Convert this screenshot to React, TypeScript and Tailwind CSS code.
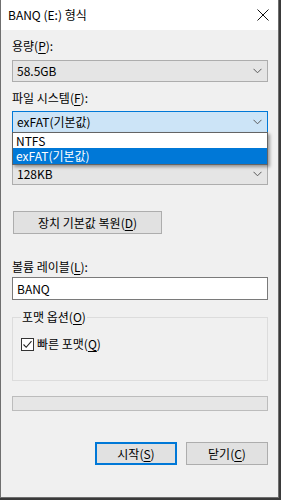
import React from "react";

const font = { fontFamily: '"Noto Sans CJK KR", "Noto Sans", sans-serif' };

function U({ c }: { c: string }) {
  return <span className="underline underline-offset-2">{c}</span>;
}

function Chevron() {
  return (
    <svg width="9" height="6" viewBox="0 0 9 6" className="absolute right-[5px] top-1/2 -translate-y-1/2">
      <path d="M0.5 0.8 L4.5 4.8 L8.5 0.8" fill="none" stroke="#5a5a5a" strokeWidth="1" />
    </svg>
  );
}

function Combo({ text, focused }: { text: string; focused?: boolean }) {
  return (
    <div
      className={`relative h-[22px] w-[256px] flex items-center pl-[4px] text-[12px] leading-[16px] text-black border ${
        focused ? "bg-[#cce4f7] border-[#0078d7]" : "bg-[#e5e5e5] border-[#adadad]"
      }`}
    >
      {text}
      <Chevron />
    </div>
  );
}

function Label({ children, mt }: { children: React.ReactNode; mt: string }) {
  return <div className={`${mt} h-[16px] text-[12px] leading-[16px] text-black`}>{children}</div>;
}

export default function App() {
  return (
    <div className="w-[281px] h-[500px] bg-[#3a3a3a] overflow-hidden" style={font}>
      <div className="relative w-[279px] h-[498px] bg-[#f0f0f0] border-l border-r border-b border-[#6f6f6f] flex flex-col">
        {/* Title bar */}
        <div className="h-[30px] bg-white flex items-center justify-between pl-[7px] pr-[8px] shrink-0">
          <span className="text-[12px] leading-[16px] text-black">BANQ (E:) 형식</span>
          <svg width="12" height="12" viewBox="0 0 12 12" className="mr-[1px]">
            <path d="M0.5 0.5 L11.5 11.5 M11.5 0.5 L0.5 11.5" stroke="#111" strokeWidth="1" />
          </svg>
        </div>

        {/* Body */}
        <div className="flex flex-col pl-[11px]">
          <Label mt="mt-[8px]">
            용량(<U c="P" />):
          </Label>
          <div className="mt-[6px]">
            <Combo text="58.5GB" />
          </div>
          <Label mt="mt-[8px]">
            파일 시스템(<U c="F" />):
          </Label>
          <div className="mt-[5px]">
            <Combo text="exFAT(기본값)" focused />
          </div>
          {/* space of the label hidden under the open list */}
          <div className="mt-[7px] h-[16px]" />
          <div className="mt-[7px]">
            <Combo text="128KB" />
          </div>
          <button className="mt-[26px] h-[23px] w-[149px] ml-[1px] bg-[#e1e1e1] border border-[#adadad] text-[12px] leading-[16px] text-black flex items-center justify-center">
            장치 기본값 복원(<U c="D" />)
          </button>
          <Label mt="mt-[25px]">
            볼륨 레이블(<U c="L" />):
          </Label>
          <div className="mt-[2px] h-[23px] w-[256px] bg-white border border-[#7a7a7a] flex items-center pl-[4px] text-[12px] leading-[16px] text-black">
            BANQ
          </div>

          {/* Group box */}
          <div className="relative mt-[17px] h-[64px] w-[256px] border border-[#dcdcdc]">
            <div className="absolute left-[8px] top-[-9px] px-[1px] bg-[#f0f0f0] text-[12px] leading-[16px] text-black">
              포맷 옵션(<U c="O" />)
            </div>
            <div className="absolute left-[8px] top-[18px] flex items-center gap-[3px]">
              <div className="w-[13px] h-[13px] border border-[#333] bg-white flex items-center justify-center">
                <svg width="11" height="11" viewBox="0 0 11 11">
                  <path d="M1.5 5.5 L4.2 8.3 L9.5 2.2" fill="none" stroke="#222" strokeWidth="1.1" />
                </svg>
              </div>
              <span className="text-[12px] leading-[16px] text-black">
                빠른 포맷(<U c="Q" />)
              </span>
            </div>
          </div>

          {/* Progress bar */}
          <div className="mt-[15px] h-[15px] w-[256px] bg-[#e6e6e6] border border-[#bcbcbc]" />

          {/* Buttons */}
          <div className="mt-[31px] flex justify-end w-[256px] gap-[9px]">
            <button className="h-[23px] w-[82px] bg-[#e1e1e1] border-2 border-[#0078d7] text-[12px] leading-[16px] text-black flex items-center justify-center">
              시작(<U c="S" />)
            </button>
            <button className="h-[23px] w-[82px] bg-[#e1e1e1] border border-[#adadad] text-[12px] leading-[16px] text-black flex items-center justify-center">
              닫기(<U c="C" />)
            </button>
          </div>
        </div>

        {/* Dropdown list overlay */}
        <div className="absolute left-[11px] top-[132px] w-[256px] h-[33px] bg-white border border-[#646464] shadow-[2px_2px_3px_rgba(0,0,0,0.35)] flex flex-col">
          <div className="h-[15px] flex items-center pl-[3px] text-[12px] leading-[16px] text-black">NTFS</div>
          <div className="h-[16px] flex items-center pl-[3px] bg-[#0078d7] text-[12px] leading-[16px] text-white">
            exFAT(기본값)
          </div>
        </div>
      </div>
    </div>
  );
}
